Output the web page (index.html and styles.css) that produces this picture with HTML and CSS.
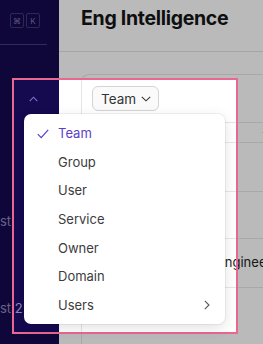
FILE: index.html
```html
<!DOCTYPE html>
<html lang="en">
<head>
  <meta charset="UTF-8">
  <meta name="viewport" content="width=device-width, initial-scale=1.0">
  <title>Eng Intelligence</title>
  <link rel="stylesheet" href="styles.css">
</head>
<body>
  <aside class="sidebar">
    <div class="shortcut">
      <span class="key">⌘</span>
      <span class="key">K</span>
    </div>
    <div class="side-divider"></div>
    <div class="side-group">
      <svg class="chev-up" width="9" height="6" viewBox="0 0 9 6"><path d="M0.7 5.2 L4.5 1.2 L8.3 5.2" fill="none" stroke="currentColor" stroke-width="1.1"/></svg>
    </div>
    <div class="side-item first">st</div>
    <div class="side-item second">st 2</div>
  </aside>

  <main class="main">
    <header class="topbar">
      <h1>Eng Intelligence</h1>
    </header>
    <section class="content">
      <div class="card">
        <button class="group-btn">Team
          <svg width="10" height="6" viewBox="0 0 10 6"><path d="M0.8 0.8 L5 4.8 L9.2 0.8" fill="none" stroke="currentColor" stroke-width="1.1"/></svg>
        </button>
        <div class="table">
          <div class="row head"><span class="cell-end">-</span></div>
          <div class="row tall"></div>
          <div class="row mid"></div>
          <div class="row tall"><span class="cell">Engineering</span></div>
          <div class="row"></div>
        </div>
      </div>
    </section>
  </main>

  <div class="spotlight"></div>

  <div class="menu">
    <div class="menu-item active">
      <svg class="check" width="12" height="10" viewBox="0 0 12 10"><path d="M0.8 5.2 L4.2 8.6 L11.2 0.8" fill="none" stroke="currentColor" stroke-width="1.2"/></svg>
      Team
    </div>
    <div class="menu-item">Group</div>
    <div class="menu-item">User</div>
    <div class="menu-item">Service</div>
    <div class="menu-item">Owner</div>
    <div class="menu-item">Domain</div>
    <div class="menu-item">Users
      <svg class="chev-right" width="6" height="10" viewBox="0 0 6 10"><path d="M0.8 0.8 L5 5 L0.8 9.2" fill="none" stroke="currentColor" stroke-width="1.1"/></svg>
    </div>
  </div>
</body>
</html>
```

FILE: styles.css
```css
* { box-sizing: border-box; }
body {
  margin: 0;
  width: 263px;
  height: 344px;
  overflow: hidden;
  display: flex;
  font-family: Inter, "Noto Sans", sans-serif;
  background: #fff;
  position: relative;
}
.sidebar {
  width: 59px;
  flex: none;
  background: #150950;
  color: #8e88b8;
  position: relative;
}
.shortcut {
  display: flex;
  gap: 2px;
  margin: 13px 0 0 10px;
}
.key {
  width: 14px;
  height: 15px;
  border: 1px solid #403777;
  border-radius: 2px;
  font-size: 8px;
  color: #7d77ad;
  display: flex;
  align-items: center;
  justify-content: center;
}
.side-divider {
  margin-top: 16px;
  width: 47px;
  height: 1px;
  background: #443c86;
}
.side-group {
  height: 56px;
  display: flex;
  align-items: flex-end;
  padding-left: 29px;
  color: #7e74cc;
}
.chev-up { display: block; margin-bottom: -1px; }
.side-item {
  font-size: 13px;
  line-height: 16px;
}
.side-item.first { margin-top: 112px; }
.side-item.second { margin-top: 71px; }

.main {
  flex: 1;
  min-width: 0;
}
.topbar {
  height: 52px;
  border-bottom: 1px solid #e3e3e3;
  padding-left: 22px;
}
.topbar h1 {
  margin: 0;
  padding-top: 6px;
  font-size: 19.5px;
  font-weight: 700;
  letter-spacing: -0.3px;
  color: #151515;
}
.content {
  padding: 22px 0 0 22px;
}
.card {
  border: 1px solid #e6e6e6;
  border-right: none;
  border-radius: 8px 0 0 8px;
  padding-top: 11px;
  height: 280px;
  overflow: hidden;
}
.group-btn {
  margin-left: 10px;
  height: 25px;
  padding: 0 7px 0 8px;
  border: 1px solid #d4d4d4;
  border-radius: 6px;
  background: #fafafa;
  font-family: inherit;
  font-size: 13.5px;
  color: #333;
  display: flex;
  align-items: center;
  gap: 5px;
}
.table { margin-top: 11px; }
.row {
  height: 48px;
  border-top: 1px solid #e6e6e6;
  position: relative;
}
.row.head { height: 20px; }
.row.mid { height: 47px; }
.row.tall { height: 49px; }
.cell {
  position: absolute;
  left: 135px;
  top: 15px;
  font-size: 13px;
  color: #222;
  white-space: nowrap;
}
.cell-end {
  position: absolute;
  left: 180px;
  top: 1px;
  font-size: 13px;
  color: #222;
}

.spotlight {
  position: absolute;
  left: 12px;
  top: 78px;
  width: 226px;
  height: 256px;
  border: 2.5px solid #e8688f;
  box-shadow: 0 0 0 999px rgba(0, 0, 0, 0.27);
  pointer-events: none;
}
.menu {
  position: absolute;
  left: 24px;
  top: 114px;
  width: 201px;
  height: 210px;
  padding: 4.7px 0;
  background: #fff;
  border-radius: 7px;
  box-shadow: 0 0 0 1px rgba(0, 0, 0, 0.05), 0 4px 14px rgba(0, 0, 0, 0.12);
}
.menu-item {
  height: 28.7px;
  padding-left: 34px;
  padding-right: 15px;
  display: flex;
  align-items: center;
  font-size: 13px;
  color: #3c3c3c;
  position: relative;
}
.menu-item.active { color: #5a3ec8; }
.check {
  position: absolute;
  left: 13px;
  top: 10px;
}
.chev-right {
  margin-left: auto;
  color: #555;
}
```
